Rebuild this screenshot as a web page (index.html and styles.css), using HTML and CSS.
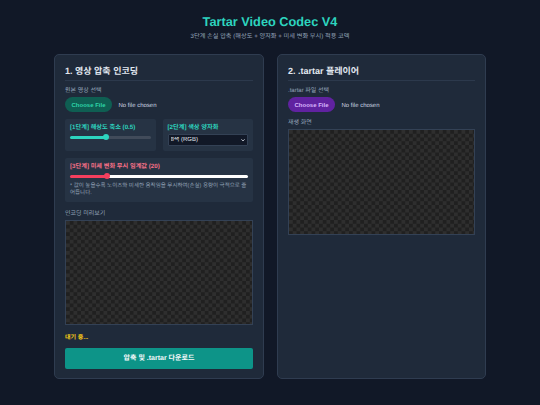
FILE: index.html
```html
<!DOCTYPE html>
<html lang="ko">
<head>
	<meta charset="utf-8">
	<title>Tartar Video Codec V4</title>
	<link rel="stylesheet" href="styles.css">
</head>
<body>
	<header class="pageHead">
		<h1>Tartar Video Codec V4</h1>
		<p>3단계 손실 압축 (해상도 + 양자화 + 미세 변화 무시) 적용 코덱</p>
	</header>
	<main class="columns">
		<section class="card">
			<h2>1. 영상 압축 인코딩</h2>
			<label class="fieldLabel" for="srcFile">원본 영상 선택</label>
			<input id="srcFile" class="fileInput tealFile" type="file">
			<div class="stepRow">
				<div class="stepBox">
					<label class="stepLabel tealText" for="scale">[1단계] 해상도 축소 (0.5)</label>
					<input id="scale" class="slider tealSlider" type="range" min="0.1" max="1" step="0.1" value="0.5">
				</div>
				<div class="stepBox">
					<label class="stepLabel tealText" for="quant">[2단계] 색상 양자화</label>
					<select id="quant" class="quantSelect"><option>8색 (RGB)</option></select>
				</div>
			</div>
			<div class="stepBox wideBox">
				<label class="stepLabel roseText" for="thresh">[3단계] 미세 변화 무시 임계값 (20)</label>
				<input id="thresh" class="slider roseSlider" type="range" min="0" max="100" value="20">
				<p class="note">* 값이 높을수록 노이즈와 미세한 움직임을 무시하여(손실) 용량이 극적으로 줄어듭니다.</p>
			</div>
			<div class="fieldLabel">인코딩 미리보기</div>
			<div class="checker"></div>
			<div class="status">대기 중...</div>
			<button class="mainBtn" type="button">압축 및 .tartar 다운로드</button>
		</section>
		<section class="card">
			<h2>2. .tartar 플레이어</h2>
			<label class="fieldLabel" for="tarFile">.tartar 파일 선택</label>
			<input id="tarFile" class="fileInput purpleFile" type="file">
			<div class="fieldLabel playLabel">재생 화면</div>
			<div class="checker"></div>
		</section>
	</main>
</body>
</html>
```

FILE: styles.css
```css
* { box-sizing: border-box; text-rendering: geometricPrecision; }
body {
	margin: 0;
	padding: 14px 54px 27px;
	background-color: #111827;
	color: #e2e8f0;
	font-family: "Liberation Sans", "Noto Sans CJK KR", sans-serif;
	overflow: hidden;
}

.pageHead { text-align: center; }
.pageHead h1 { margin: 0; font-size: 12.75px; line-height: 15px; color: #2dd4bf; font-weight: bold; }
.pageHead p { margin: 4px 0 0; font-size: 6.2px; line-height: 8px; color: #94a3b8; }

.columns { display: grid; grid-template-columns: 210px 209px; justify-content: space-between; align-items: stretch; margin-top: 13px; }

.card { display: flex; flex-direction: column; padding: 10px 10px 9px; background-color: #1f2a3a; border: 1px solid #2f3c50; border-radius: 5px; }
.card h2 { margin: 0 0 6px; padding-bottom: 2px; font-size: 9px; line-height: 13px; color: #e2e8f0; border-bottom: 1px solid #2c394c; }

.fieldLabel { display: block; font-size: 6px; line-height: 8px; color: #94a3b8; margin-bottom: 2px; }
.playLabel { margin-top: 7px; }

.fileInput { display: block; width: 100%; height: 15px; font: 6px "Liberation Sans", "Noto Sans CJK KR", sans-serif; color: #cbd5e1; }
.fileInput::file-selector-button { height: 15px; margin-right: 6.5px; padding: 0 6.5px; border: 0; border-radius: 8px; font: bold 6px "Liberation Sans", sans-serif; }
.tealFile::file-selector-button { background-color: #0f5e52; color: #2dd4a8; }
.purpleFile::file-selector-button { background-color: #6022a0; color: #d8b4fe; }

.stepRow { display: grid; grid-template-columns: 1fr 1fr; gap: 7px; margin-top: 7px; }
.stepBox { padding: 5px; background-color: #263344; border-radius: 2px; }
.wideBox { margin-top: 7px; margin-bottom: 7.5px; }
.stepLabel { display: block; font-size: 6.2px; line-height: 8px; font-weight: bold; margin-bottom: 2px; }
.tealText { color: #2dd4bf; }
.roseText { color: #f87187; }

.slider { display: block; width: 100%; height: 6px; margin: 1px 0 0; appearance: none; -webkit-appearance: none; background: transparent; }
.slider::-webkit-slider-runnable-track { height: 3px; border-radius: 2px; }
.slider::-webkit-slider-thumb { -webkit-appearance: none; width: 6px; height: 6px; margin-top: -1.5px; border-radius: 50%; }
.tealSlider::-webkit-slider-runnable-track { background: linear-gradient(to right, #2dd4bf 45%, #414b5a 45%); }
.tealSlider::-webkit-slider-thumb { background-color: #2dd4bf; }
.roseSlider::-webkit-slider-runnable-track { background: linear-gradient(to right, #f43f5e 21%, #ffffff 21%); }
.roseSlider::-webkit-slider-thumb { background-color: #f43f5e; }

.quantSelect {
	display: block;
	width: 100%;
	height: 12px;
	padding: 0 2px;
	font: 6px "Liberation Sans", "Noto Sans CJK KR", sans-serif;
	color: #e2e8f0;
	background: #111827 url("data:image/svg+xml,%3Csvg xmlns='http://www.w3.org/2000/svg' width='4' height='3' viewBox='0 0 10 8'%3E%3Cpath d='M1 1l4 4 4-4' fill='none' stroke='%23e2e8f0' stroke-width='2.5'/%3E%3C/svg%3E") no-repeat right 2px center;
	border: 1px solid #334155;
	border-radius: 1px;
	appearance: none;
	-webkit-appearance: none;
}

.note { margin: 4px 0 0; font-size: 5.5px; line-height: 7px; color: #94a3b8; }

.checker {
	height: 105.5px;
	flex: none;
	background-image: conic-gradient(#202020 25%, #2e2e2e 0 50%, #202020 0 75%, #2e2e2e 0);
	background-size: 7.5px 7.5px;
	border: 1px solid #334155;
}

.status { margin-top: 9px; font-size: 6px; line-height: 8px; font-weight: bold; color: #facc15; }
.mainBtn { margin-top: 6px; height: 20.5px; flex: none; border: 0; border-radius: 2px; background-color: #0d9488; color: #f8fafc; font: bold 7px "Liberation Sans", "Noto Sans CJK KR", sans-serif; }
```
